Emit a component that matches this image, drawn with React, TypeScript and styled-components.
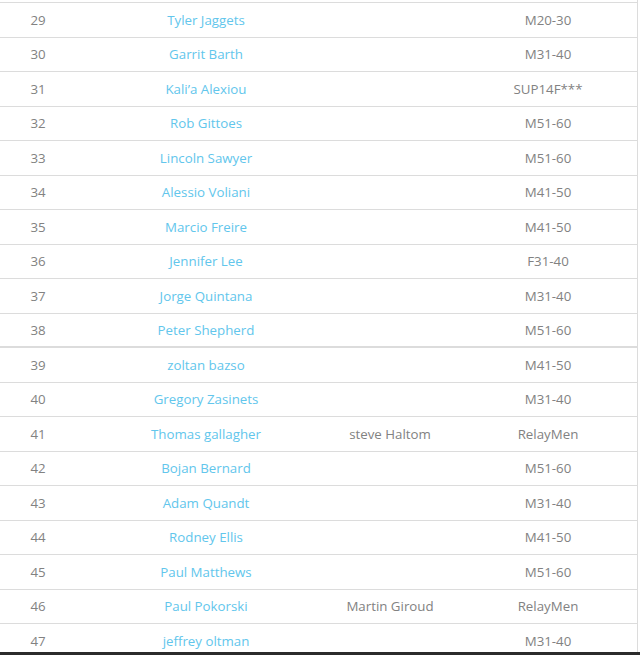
import React from "react";
import styled, { createGlobalStyle } from "styled-components";

const Global = createGlobalStyle`
  html, body { margin: 0; padding: 0; background: #fff; }
  body { font-family: "Open Sans", "Liberation Sans", sans-serif; overflow: hidden; }
`;

const Page = styled.div`
  width: 640px;
  height: 655px;
  overflow: hidden;
  display: flex;
  flex-direction: column;
`;

const Frame = styled.div`
  width: 637px;
  border-right: 1px solid #dcdcdc;
  padding-top: 2px;
  flex: 1;
  overflow: hidden;
`;

const Table = styled.div`
  display: flex;
  flex-direction: column;
  border-top: 1px solid #dcdcdc;
`;

const Row = styled.div<{ $thick?: boolean }>`
  display: grid;
  grid-template-columns: 76px 260px 108px 193px;
  height: 34.5px;
  box-sizing: border-box;
  border-bottom: ${(p) => (p.$thick ? "2px" : "1px")} solid #dcdcdc;
  align-items: center;
  font-size: 13.3px;
`;

const Num = styled.div`
  text-align: center;
  color: #828282;
`;

const Name = styled.div`
  text-align: center;
  color: #62c6ec;
`;

const Partner = styled.div`
  text-align: center;
  color: #828282;
`;

const Cat = styled.div`
  text-align: center;
  padding-left: 15px;
  color: #828282;
`;

const BottomBar = styled.div`
  height: 3px;
  background: #2b2b2b;
  flex: none;
`;

const rows: [number, string, string, string][] = [
  [29, "Tyler Jaggets", "", "M20-30"],
  [30, "Garrit Barth", "", "M31-40"],
  [31, "Kali’a Alexiou", "", "SUP14F***"],
  [32, "Rob Gittoes", "", "M51-60"],
  [33, "Lincoln Sawyer", "", "M51-60"],
  [34, "Alessio Voliani", "", "M41-50"],
  [35, "Marcio Freire", "", "M41-50"],
  [36, "Jennifer Lee", "", "F31-40"],
  [37, "Jorge Quintana", "", "M31-40"],
  [38, "Peter Shepherd", "", "M51-60"],
  [39, "zoltan bazso", "", "M41-50"],
  [40, "Gregory Zasinets", "", "M31-40"],
  [41, "Thomas gallagher", "steve Haltom", "RelayMen"],
  [42, "Bojan Bernard", "", "M51-60"],
  [43, "Adam Quandt", "", "M31-40"],
  [44, "Rodney Ellis", "", "M41-50"],
  [45, "Paul Matthews", "", "M51-60"],
  [46, "Paul Pokorski", "Martin Giroud", "RelayMen"],
  [47, "jeffrey oltman", "", "M31-40"],
];

export default function App() {
  return (
    <Page>
      <Global />
      <Frame>
        <Table>
          {rows.map(([n, name, partner, cat]) => (
            <Row key={n} $thick={n === 38}>
              <Num>{n}</Num>
              <Name>{name}</Name>
              <Partner>{partner}</Partner>
              <Cat>{cat}</Cat>
            </Row>
          ))}
        </Table>
      </Frame>
      <BottomBar />
    </Page>
  );
}
